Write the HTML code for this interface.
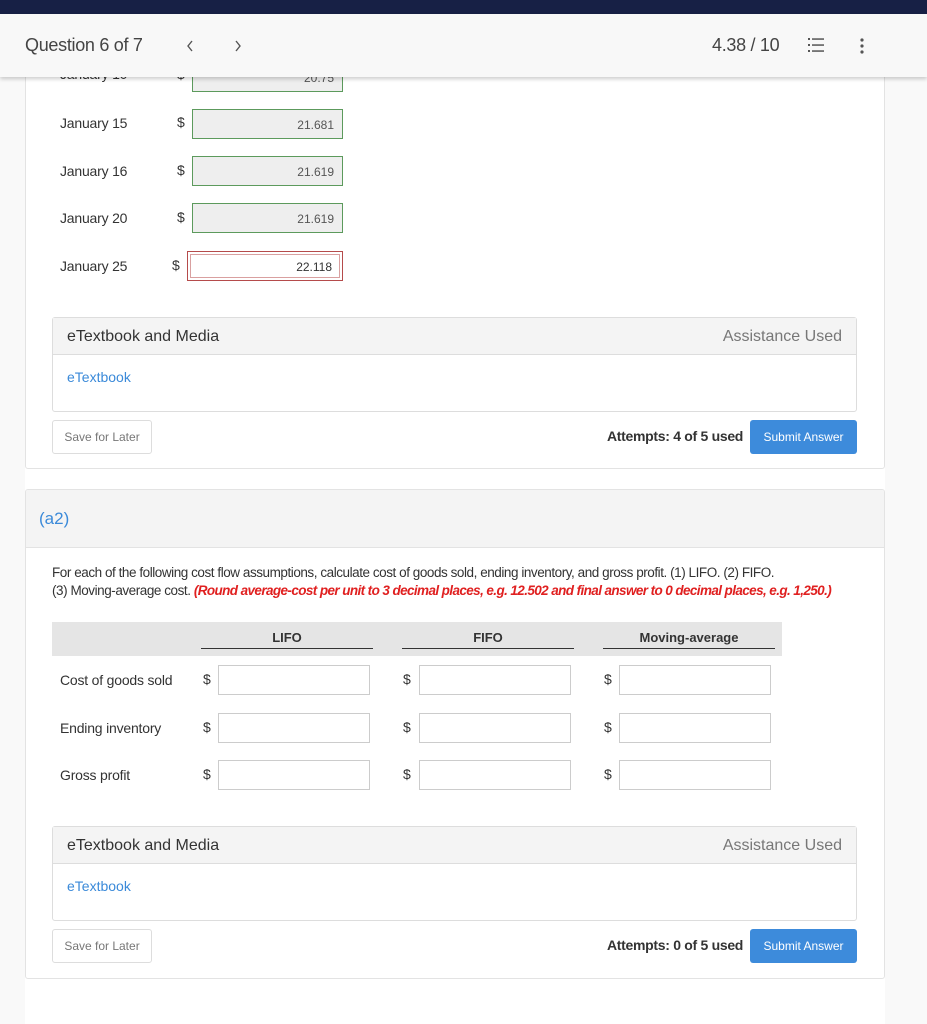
<!DOCTYPE html>
<html><head><style>
*{box-sizing:border-box;margin:0;padding:0}
body{width:927px;height:1024px;overflow:hidden;background:#f9f9f9;font-family:"Liberation Sans",sans-serif;color:#333;position:relative}
.a{position:absolute}
.card{position:absolute;background:#fff;border:1px solid #e3e3e3;border-radius:3px}
.lbl{font-size:14px;color:#333;letter-spacing:-0.2px}
.dol{font-size:14px;color:#333}
.gin{position:absolute;width:151px;height:30px;background:#eee;border:1px solid #5c9a5c;font-size:12px;color:#555;text-align:right;padding:8px 8px 0 0}
.rin{position:absolute;width:156px;height:30px;background:#fff;border:1px solid #b54b4b;box-shadow:inset 0 0 0 2px #fff,inset 0 0 0 3px #d9a0a0;font-size:12px;color:#333;text-align:right;padding:8px 10px 0 0}
.ein{position:absolute;width:152px;height:30px;background:#fff;border:1px solid #ccc}
.etb{position:absolute;border:1px solid #ddd;border-radius:3px;background:#fff}
.etb .h{height:37px;background:#f4f4f4;border-bottom:1px solid #ddd;font-size:16px;padding:10px 14px;position:relative}
.etb .h span{position:absolute;right:14px;top:10px;color:#777}
.etb .l{font-size:14px;color:#3b8ad9;padding:14px 14px}
.save{position:absolute;width:100px;height:34px;border:1px solid #ddd;border-radius:3px;font-size:12px;color:#777;text-align:center;line-height:32px;background:#fff}
.sub{position:absolute;width:107px;height:34px;background:#3d8bdb;border-radius:3px;color:#fff;font-size:12px;text-align:center;line-height:34px}
.att{position:absolute;font-size:14px;font-weight:bold;color:#333;letter-spacing:-0.3px}
</style></head><body>
<div class="a" style="left:25px;top:77px;width:860px;height:947px;background:#fff"></div>
<div class="card" style="left:25px;top:40px;width:860px;height:429px"></div>
<div class="a lbl" style="left:60px;top:66px">January 10</div>
<div class="a dol" style="left:177px;top:66px">$</div>
<div class="gin" style="left:192px;top:62px">20.75</div>
<div class="a lbl" style="left:60px;top:115px">January 15</div><div class="a dol" style="left:177px;top:114px">$</div><div class="gin" style="left:192px;top:109px">21.681</div>
<div class="a lbl" style="left:60px;top:163px">January 16</div><div class="a dol" style="left:177px;top:162px">$</div><div class="gin" style="left:192px;top:156px">21.619</div>
<div class="a lbl" style="left:60px;top:210px">January 20</div><div class="a dol" style="left:177px;top:209px">$</div><div class="gin" style="left:192px;top:203px">21.619</div>
<div class="a lbl" style="left:60px;top:258px">January 25</div><div class="a dol" style="left:172px;top:257px">$</div><div class="rin" style="left:187px;top:251px">22.118</div>
<div class="etb" style="left:52px;top:317px;width:805px;height:95px"><div class="h">eTextbook and Media<span>Assistance Used</span></div><div class="l">eTextbook</div></div>
<div class="save" style="left:52px;top:420px">Save for Later</div>
<div class="att" style="left:607px;top:428px">Attempts: 4 of 5 used</div>
<div class="sub" style="left:750px;top:420px">Submit Answer</div>

<div class="card" style="left:25px;top:489px;width:860px;height:490px;overflow:hidden">
<div style="height:58px;background:#f4f4f4;border-bottom:1px solid #e3e3e3;font-size:17px;color:#3b8ad9;padding:19px 13px">(a2)</div>
</div>
<div class="a" style="left:52px;top:564px;width:810px;font-size:13.5px;line-height:18px;letter-spacing:-0.45px">For each of the following cost flow assumptions, calculate cost of goods sold, ending inventory, and gross profit. (1) LIFO. (2) FIFO.<br>(3) Moving-average cost. <i style="color:#e02020;font-weight:bold;letter-spacing:-0.6px">(Round average-cost per unit to 3 decimal places, e.g. 12.502 and final answer to 0 decimal places, e.g. 1,250.)</i></div>
<div class="a" style="left:52px;top:622px;width:730px;height:34px;background:#e5e5e5"></div>
<div class="a" style="left:201px;top:630px;width:172px;border-bottom:1px solid #333;text-align:center;font-size:13px;font-weight:bold;padding-bottom:3px">LIFO</div>
<div class="a" style="left:402px;top:630px;width:172px;border-bottom:1px solid #333;text-align:center;font-size:13px;font-weight:bold;padding-bottom:3px">FIFO</div>
<div class="a" style="left:603px;top:630px;width:172px;border-bottom:1px solid #333;text-align:center;font-size:13px;font-weight:bold;padding-bottom:3px">Moving-average</div>
<div class="a lbl" style="left:60px;top:672px">Cost of goods sold</div>
<div class="a lbl" style="left:60px;top:720px">Ending inventory</div>
<div class="a lbl" style="left:60px;top:767px">Gross profit</div>
<div class="a dol" style="left:203px;top:671px">$</div><div class="ein" style="left:218px;top:665px"></div>
<div class="a dol" style="left:403px;top:671px">$</div><div class="ein" style="left:419px;top:665px"></div>
<div class="a dol" style="left:604px;top:671px">$</div><div class="ein" style="left:619px;top:665px"></div>
<div class="a dol" style="left:203px;top:719px">$</div><div class="ein" style="left:218px;top:713px"></div>
<div class="a dol" style="left:403px;top:719px">$</div><div class="ein" style="left:419px;top:713px"></div>
<div class="a dol" style="left:604px;top:719px">$</div><div class="ein" style="left:619px;top:713px"></div>
<div class="a dol" style="left:203px;top:766px">$</div><div class="ein" style="left:218px;top:760px"></div>
<div class="a dol" style="left:403px;top:766px">$</div><div class="ein" style="left:419px;top:760px"></div>
<div class="a dol" style="left:604px;top:766px">$</div><div class="ein" style="left:619px;top:760px"></div>
<div class="etb" style="left:52px;top:826px;width:805px;height:95px"><div class="h">eTextbook and Media<span>Assistance Used</span></div><div class="l">eTextbook</div></div>
<div class="save" style="left:52px;top:929px">Save for Later</div>
<div class="att" style="left:607px;top:937px">Attempts: 0 of 5 used</div>
<div class="sub" style="left:750px;top:929px">Submit Answer</div>

<div class="a" style="left:0;top:0;width:927px;height:14px;background:#172045"></div>
<div class="a" style="left:0;top:14px;width:927px;height:63px;background:#f8f8f8;box-shadow:0 2px 4px rgba(0,0,0,.2)">
<div class="a" style="left:25px;top:21px;font-size:18px;color:#444;letter-spacing:-0.3px">Question 6 of 7</div>
<svg class="a" style="left:186px;top:25px" width="8" height="14"><path d="M6 2L2 7L6 12" fill="none" stroke="#555" stroke-width="1.4"/></svg>
<svg class="a" style="left:234px;top:25px" width="8" height="14"><path d="M2 2L6 7L2 12" fill="none" stroke="#555" stroke-width="1.4"/></svg>
<div class="a" style="left:712px;top:21px;font-size:18px;color:#444;letter-spacing:-0.3px">4.38 / 10</div>
<svg class="a" style="left:808px;top:23px" width="22" height="16" viewBox="0 0 22 16"><g fill="#555"><rect x="0" y="1" width="2" height="2"/><rect x="0" y="7" width="2" height="2"/><rect x="0" y="13" width="2" height="2"/><rect x="4" y="1.3" width="12" height="1.5"/><rect x="4" y="7.3" width="12" height="1.5"/><rect x="4" y="13.3" width="12" height="1.5"/></g></svg>
<svg class="a" style="left:859px;top:23px" width="6" height="18"><g fill="#555"><circle cx="3" cy="3" r="1.6"/><circle cx="3" cy="9" r="1.6"/><circle cx="3" cy="15" r="1.6"/></g></svg>
</div>
</body></html>
